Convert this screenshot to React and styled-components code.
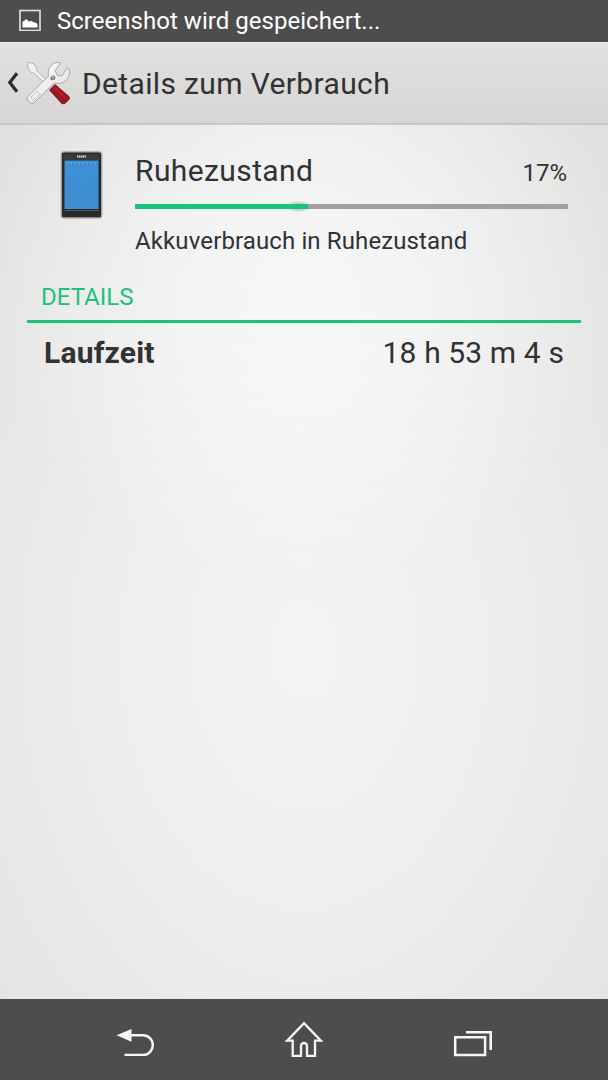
import React from "react"
import styled, { createGlobalStyle } from "styled-components"

const usage = { name: "Ruhezustand", percent: 17, fill: 40, description: "Akkuverbrauch in Ruhezustand" }

const details = [{ label: "Laufzeit", value: "18 h 53 m 4 s" }]

const PictureIcon = () => (
  <svg width="22" height="22" viewBox="0 -.5 22 22">
    <rect x="1" y="1" width="20" height="20" fill="none" stroke="#dcdcdc" strokeWidth="1.7" />
    <path d="M3.500 18v-6l1.500-.5 1.500-1.500h1.500l2 2.300 1.500-.8h1.500l1.500 1.400 1.500-.2 2.500 1.800V18z" fill="#fff" />
  </svg>
)

const BackChevron = () => (
  <svg width="12" height="24" viewBox="0 0 12 24">
    <path d="M10 2.200 2.800 11.500 10 20.800" fill="none" stroke="#2b2b2b" strokeWidth="3.200" />
  </svg>
)

const ToolsIcon = () => (
  <svg width="46" height="46" viewBox="0 0 46 46">
    <defs>
      <linearGradient id="steel" x1="0" y1="0" x2="1" y2="1">
        <stop offset="0" stopColor="#fff" />
        <stop offset="1" stopColor="#dedede" />
      </linearGradient>
    </defs>
    <path d="M2 2 8 4l3 4-.5 2.500L25 24l-2.500 2.500L8 13l-3-.5L1.500 7z" fill="#f1f1f1" stroke="#a5a5a5" strokeWidth=".8" />
    <path d="M29 24.500 43 36.500 43.500 39l-4.500 4.500-3 .3L23.500 30z" fill="#9f1620" stroke="#681018" strokeWidth=".8" />
    <path d="m29 28 10 9.500" stroke="#b52430" strokeWidth="1.500" />
    <path
      d="M1 37.500 22.500 16C21 9 25 3.500 31 2.200l3.800.8-5.800 7.500 2.500 5 4.500.5 5.500-8.500L43.500 10c.7 7-3.500 13.500-11 13.500L28 23 7.500 43.500 5 43.200 1.200 40z"
      fill="url(#steel)"
      stroke="#a0a0a0"
      strokeWidth=".9"
    />
    <path d="m4.500 37.500 6.500-6.500 3.500 3.300-6.500 6.500z" fill="#e9e9e9" stroke="#bdbdbd" strokeWidth=".8" />
    <path d="m25 16.500 3-1.200 1.500 2.200-1 2.500-3 .3-1.500-1.800z" fill="#777" />
    <path d="m25 18 4-1.500M27 15.500l.5 4.500" stroke="#c5c5c5" strokeWidth=".7" />
  </svg>
)

const PhoneIcon = () => (
  <svg width="44" height="68" viewBox="0 0 44 68">
    <defs>
      <pattern id="dots" width="4" height="4" patternUnits="userSpaceOnUse">
        <path d="M0 1h1v1H0zM2 3h1v1H2z" fill="#49799f" />
      </pattern>
    </defs>
    <rect x="1.200" y=".8" width="40.600" height="66.200" rx="2.500" fill="#292929" stroke="#b0b0b0" strokeWidth="1.300" />
    <path d="M3 9V3h37v6z" fill="#393939" />
    <path d="M17 5.500h9" stroke="#ddd" strokeWidth="1.800" strokeDasharray="1.400 .5" />
    <rect x="4.500" y="9.500" width="34" height="48.500" fill="#3d91d8" />
    <path d="M6 12h31v3H24l-2 3h-7v-2H7zM6 23l7 1 4 5 6 3 6-6 9-3v33H6z" fill="url(#dots)" />
    <path d="M7 12h29" stroke="#7db9c7" strokeDasharray="1 3" />
    <path d="M4 59.500h35" stroke="#57646b" strokeWidth=".8" />
  </svg>
)

const ReturnIcon = () => (
  <svg width="40" height="32" viewBox="-.5 0 40 32">
    <path d="M14 7.300h13.500a9.800 9.800 0 0 1 0 19.600H9" fill="none" stroke="#f6f6f6" strokeWidth="2.400" />
    <path d="M1 7.300 16 1v12.800z" fill="#f6f6f6" />
  </svg>
)

const HomeIcon = () => (
  <svg width="40" height="38" viewBox="0 .5 40 38">
    <path
      d="M20 2.700 3.200 20.200h5.500v15.100h8.300V25.500a3 3 0 0 1 6 0v9.800h8V20.200h5.800z"
      fill="none"
      stroke="#f6f6f6"
      strokeWidth="2.300"
    />
  </svg>
)

const RecentIcon = () => (
  <svg width="40" height="28" viewBox="0 0 40 28">
    <path d="M2.200 7.200h29.900v17.900H2.200z" fill="none" stroke="#f6f6f6" strokeWidth="2.500" />
    <path d="M13 2.300h24.700V20" fill="none" stroke="#f6f6f6" strokeWidth="2.600" />
  </svg>
)

const App = () => {
  return (
    <>
      <GlobalStyle />
      <Screen>
        <StatusBar>
          <PictureIcon />
          <StatusText>Screenshot wird gespeichert...</StatusText>
        </StatusBar>
        <Header>
          <BackChevron />
          <ToolsIcon />
          <Title>Details zum Verbrauch</Title>
        </Header>
        <Content>
          <UsageRow>
            <PhoneIcon />
            <UsageInfo>
              <UsageHead>
                <UsageName>{usage.name}</UsageName>
                <Percent>{usage.percent}%</Percent>
              </UsageHead>
              <Track>
                <Fill style={{ width: `${usage.fill}%` }} />
              </Track>
              <Description>{usage.description}</Description>
            </UsageInfo>
          </UsageRow>
          <SectionTitle>DETAILS</SectionTitle>
          {details.map((item) => (
            <DetailRow key={item.label}>
              <DetailLabel>{item.label}</DetailLabel>
              <DetailValue>{item.value}</DetailValue>
            </DetailRow>
          ))}
        </Content>
        <NavBar>
          <NavButton aria-label="Zurück" $drop={9}>
            <ReturnIcon />
          </NavButton>
          <NavButton aria-label="Startseite">
            <HomeIcon />
          </NavButton>
          <NavButton aria-label="Letzte Apps" $drop={9}>
            <RecentIcon />
          </NavButton>
        </NavBar>
      </Screen>
    </>
  )
}

const GlobalStyle = createGlobalStyle`
  * {
    box-sizing: border-box;
  }
  body {
    margin: 0;
    font-family: Roboto, "Liberation Sans", sans-serif;
    color: #303234;
  }
  svg {
    display: block;
    flex-shrink: 0;
  }
`

const Screen = styled.div`
  width: 608px;
  height: 1080px;
  display: flex;
  flex-direction: column;
  overflow: hidden;
  background:
    radial-gradient(circle 320px at 304px 270px, rgba(255, 255, 255, 0.6), rgba(255, 255, 255, 0.45) 40%, transparent),
    radial-gradient(ellipse 480px 680px at 304px 650px, #f4f4f4 0%, #efefef 35%, #e7e7e7 70%, #e1e0de 100%);
`

const StatusBar = styled.div`
  height: 42px;
  padding: 0 19px 2px;
  display: flex;
  align-items: center;
  gap: 16px;
  background: #4d4d4d;
  color: #fff;
`

const StatusText = styled.span`
  margin-top: 2px;
  font-size: 24px;
  line-height: 28px;
  letter-spacing: 0.03px;
`

const Header = styled.header`
  height: 83px;
  padding-left: 7px;
  display: flex;
  align-items: center;
  background: linear-gradient(#e2e1df, #d7d6d4);
  border-top: 1px solid #eeedeb;
  border-bottom: 2px solid #c6c7c6;

  svg + svg {
    margin-left: 7px;
  }
`

const Title = styled.h1`
  margin: 1px 0 0 10px;
  font-size: 30px;
  line-height: 36px;
  font-weight: 400;
  letter-spacing: 0.36px;
`

const Content = styled.main`
  flex: 1;
  padding: 26px 27px 0;
`

const UsageRow = styled.section`
  display: flex;
  gap: 31px;
  padding: 0 13px 0 33px;
`

const UsageInfo = styled.div`
  flex: 1;
`

const UsageHead = styled.div`
  height: 53px;
  padding-top: 1px;
  display: flex;
  align-items: baseline;
  justify-content: space-between;
`

const UsageName = styled.span`
  font-size: 30px;
  line-height: 38px;
  letter-spacing: 0.4px;
`

const Percent = styled.span`
  margin-right: 1px;
  font-size: 24px;
`

const Track = styled.div`
  height: 5px;
  background: #a0a0a0;
`

const Fill = styled.div`
  position: relative;
  height: 5px;
  background: #18c47c;

  /* soft glow around the leading end of the bar */
  &::before {
    content: "";
    position: absolute;
    right: 0;
    top: -4px;
    width: 24px;
    height: 13px;
    background: radial-gradient(ellipse 14px 6px at 60% 50%, rgba(50, 80, 65, 0.5), transparent);
  }

  &::after {
    content: "";
    position: absolute;
    inset: 0;
    background: #18c47c;
  }
`

const Description = styled.p`
  margin: 17px 0 0;
  font-size: 24px;
  line-height: 30px;
  letter-spacing: 0.12px;
`

const SectionTitle = styled.h2`
  margin: 26px 0 0;
  padding: 0 14px;
  height: 41px;
  font-size: 24px;
  line-height: 30px;
  font-weight: 400;
  color: #20c17e;
  border-bottom: 3px solid #18c47c;
`

const DetailRow = styled.div`
  display: flex;
  justify-content: space-between;
  padding: 11px 17px;
  font-size: 30px;
  line-height: 38px;
`

const DetailLabel = styled.span`
  font-weight: 700;
  letter-spacing: 0.18px;
`

const DetailValue = styled.span`
  letter-spacing: 0.12px;
`

const NavBar = styled.nav`
  height: 81px;
  padding: 0 51px;
  display: flex;
  background: #4d4d4d;
`

const NavButton = styled.button`
  flex: 1;
  display: flex;
  align-items: center;
  justify-content: center;
  padding: ${({ $drop = 0 }) => $drop}px 0 0;
  border: none;
  background: none;
`

export default App
